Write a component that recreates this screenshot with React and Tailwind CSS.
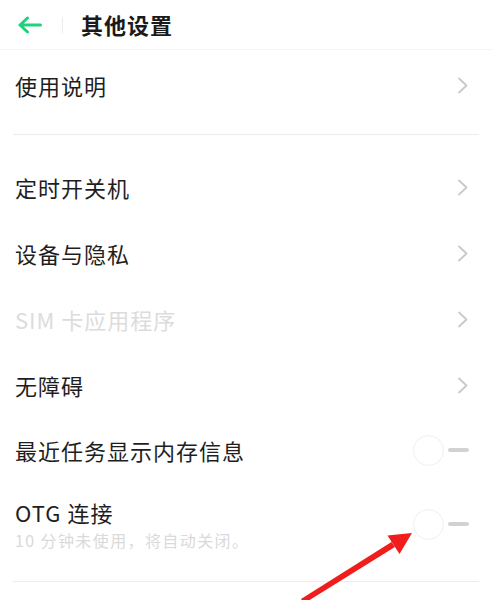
import React from "react";

const font = { fontFamily: '"Noto Sans CJK SC", "Noto Sans", sans-serif' };

function Chevron() {
  return (
    <svg width="12" height="17" viewBox="0 0 12 17" className="shrink-0">
      <path d="M2 1.5 L9.5 8.5 L2 15.5" fill="none" stroke="#c9c9c9" strokeWidth="1.8" strokeLinecap="round" strokeLinejoin="round" />
    </svg>
  );
}

function Toggle() {
  return (
    <div className="flex items-center shrink-0">
      <div className="w-[31px] h-[31px] rounded-full border border-[#efefef] bg-white" />
      <div className="w-[21px] h-[4px] rounded-full bg-[#d2d2d2] ml-[4px]" />
    </div>
  );
}

function Row({ label, muted, toggle }) {
  return (
    <div className="h-[66px] flex items-center justify-between pl-[15px] pr-[23px]">
      <span className={`text-[22px] tracking-[1px] leading-[30px] ${muted ? "text-[#dcdcdc]" : "text-[#1e1e1e]"}`}>{label}</span>
      {toggle ? <Toggle /> : <Chevron />}
    </div>
  );
}

export default function App() {
  return (
    <div className="relative w-[492px] h-[600px] bg-white overflow-hidden" style={font}>
      {/* header */}
      <div className="h-[50px] flex items-center border-b border-[#f4f4f4]">
        <div className="w-[62px] pl-[17px] flex items-center">
          <svg width="25" height="18" viewBox="0 0 25 18">
            <path d="M23.5 9 H3 M10.5 2 L3 9 L10.5 16" fill="none" stroke="#1fd27c" strokeWidth="3" strokeLinecap="round" strokeLinejoin="round" />
          </svg>
        </div>
        <div className="w-px h-[16px] bg-[#ececec]" />
        <span className="ml-[18px] text-[22px] font-bold tracking-[1px] text-[#1a1a1a]">其他设置</span>
      </div>

      <div className="h-[70px] flex items-center justify-between pl-[15px] pr-[23px]">
        <span className="text-[22px] tracking-[1px] leading-[30px] text-[#1e1e1e]">使用说明</span>
        <Chevron />
      </div>
      <div className="mt-[14px] mx-[13px] h-px bg-[#ececec]" />
      <div className="h-[19px]" />

      <Row label="定时开关机" />
      <Row label="设备与隐私" />
      <Row label="SIM 卡应用程序" muted />
      <Row label="无障碍" />
      <div className="h-[64px] flex items-center justify-between pl-[15px] pr-[23px]">
        <span className="text-[22px] tracking-[1px] leading-[30px] text-[#1e1e1e]">最近任务显示内存信息</span>
        <Toggle />
      </div>

      <div className="flex items-center justify-between pl-[15px] pr-[23px] pt-[15px] pb-[30px]">
        <div className="flex flex-col">
          <span className="text-[22px] tracking-[1px] leading-[30px] text-[#1e1e1e]">OTG 连接</span>
          <span className="mt-[2px] text-[16px] tracking-[1.4px] leading-[22px] text-[#dadada]">10 分钟未使用，将自动关闭。</span>
        </div>
        <Toggle />
      </div>
      <div className="mx-[13px] h-px bg-[#ececec]" />

      {/* red annotation arrow */}
      <svg className="absolute left-0 top-0 pointer-events-none" width="492" height="600" viewBox="0 0 492 600">
        <polygon points="391.5,542 394.9,547 304,603.5 301,599" fill="#ef1d1b" />
        <polygon points="412,533 387.5,535.5 399.5,554" fill="#ef1d1b" />
      </svg>
    </div>
  );
}
